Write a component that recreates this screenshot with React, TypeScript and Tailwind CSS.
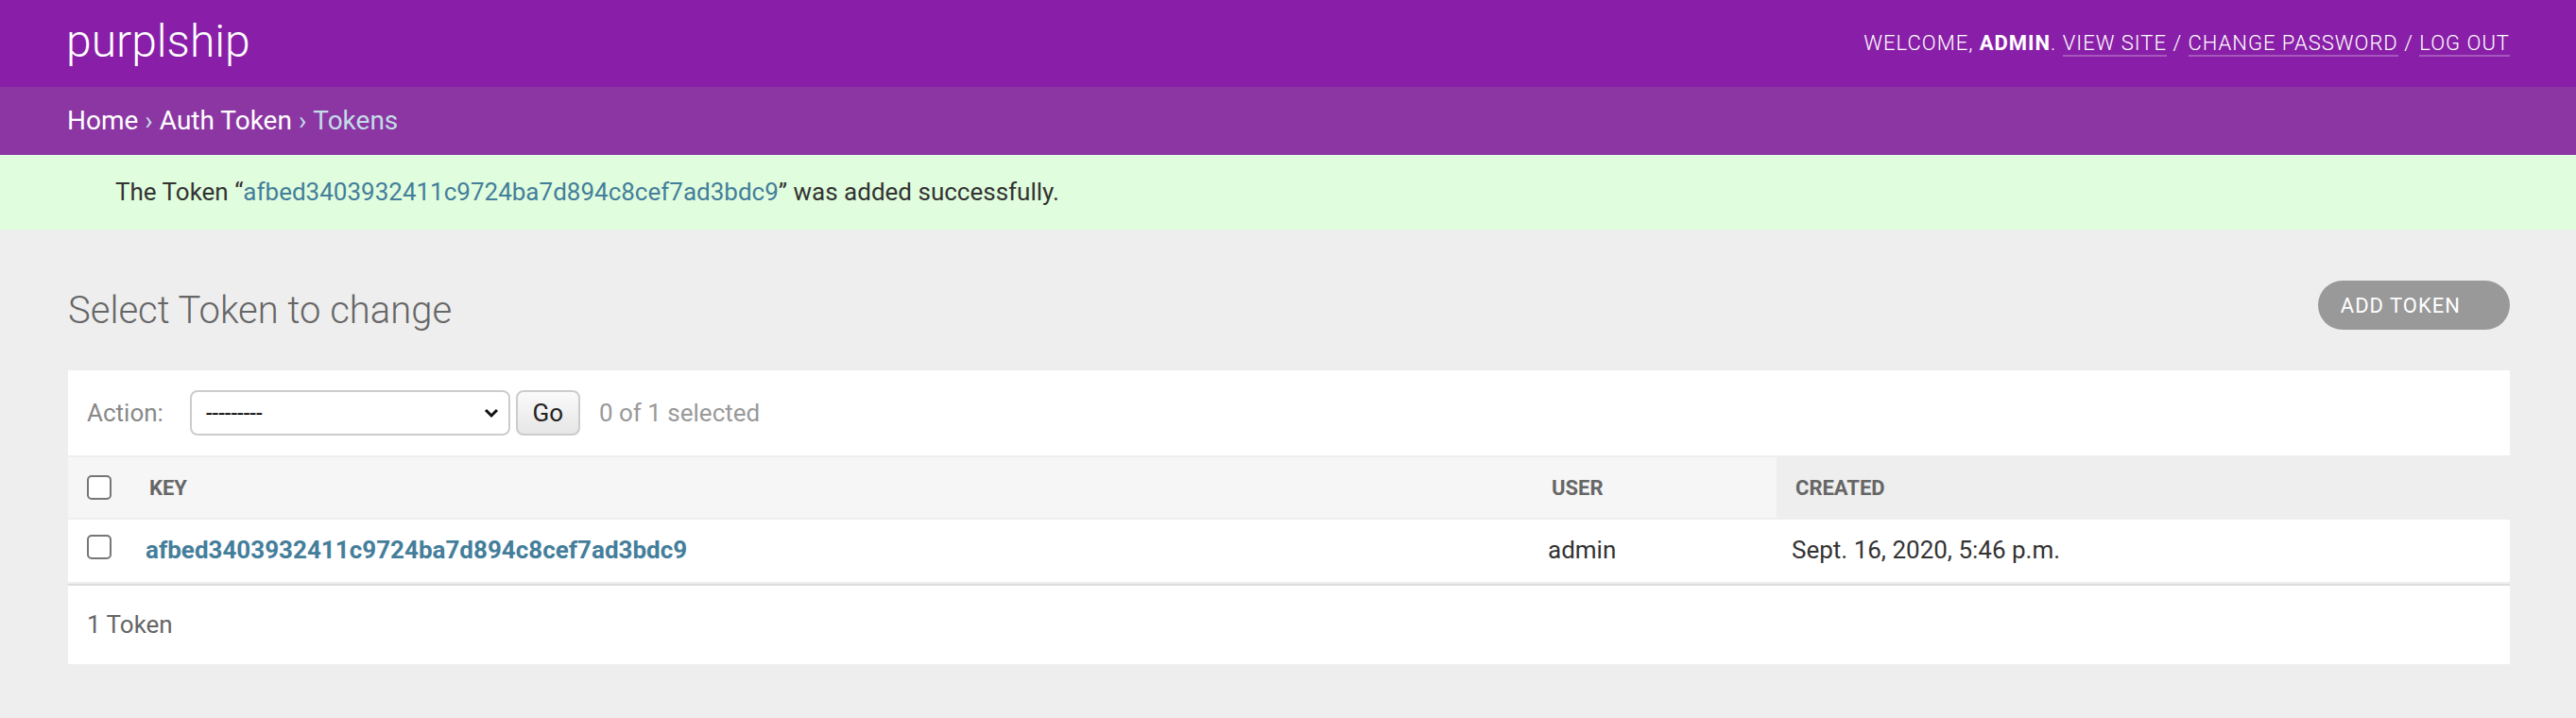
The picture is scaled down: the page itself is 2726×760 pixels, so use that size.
import React from "react";

const font = { fontFamily: "Roboto, 'Liberation Sans', sans-serif" };

function Checkbox() {
  return (
    <div className="h-[26px] w-[26px] rounded-[5px] border-2 border-[#767676] bg-white" />
  );
}

function Header() {
  return (
    <div className="flex h-[92px] items-center justify-between bg-[#891fa8] pl-[70px] pr-[70px] text-white">
      <div className="pb-[4px] text-[48px] font-light leading-none">purplship</div>
      <div className="pb-[2px] text-[22px] font-light uppercase tracking-[1px]">
        Welcome, <strong className="font-bold">admin</strong>.{" "}
        <a className="border-b-2 border-white/25">View site</a> /{" "}
        <a className="border-b-2 border-white/25">Change password</a> /{" "}
        <a className="border-b-2 border-white/25">Log out</a>
      </div>
    </div>
  );
}

function Breadcrumbs() {
  return (
    <div className="flex h-[72px] items-center bg-[#8b36a2] pl-[71px] text-[28px] text-[#c4dce8]">
      <a className="text-white">Home</a>
      <span className="px-[7px]">›</span>
      <a className="text-white">Auth Token</a>
      <span className="px-[7px]">›</span>
      <span>Tokens</span>
    </div>
  );
}

function Message() {
  return (
    <div className="mb-[20px] flex h-[79px] items-center bg-[#e0fddd] pl-[122px] text-[26px] text-[#333]">
      The Token “<a className="text-[#447e9b]">afbed3403932411c9724ba7d894c8cef7ad3bdc9</a>” was
      added successfully.
    </div>
  );
}

function Actions() {
  return (
    <div className="flex h-[90px] items-center bg-white pl-[20px] text-[26px] text-[#999]">
      <span className="text-[#888]">Action:</span>
      <div className="ml-[28px] flex h-[48px] w-[339px] items-center justify-between rounded-[8px] border-2 border-[#ccc] bg-white pl-[15px] pr-[10px] text-[24px] text-black">
        <span>---------</span>
        <svg width="16" height="12" viewBox="0 0 16 12">
          <path d="M2 3 L8 9 L14 3" fill="none" stroke="#111" strokeWidth="3" />
        </svg>
      </div>
      <div className="ml-[6px] flex h-[48px] w-[68px] items-center justify-center rounded-[8px] border-2 border-[#ccc] bg-[linear-gradient(#fafafa,#e6e6e6)] text-[26px] text-[#222]">
        Go
      </div>
      <span className="ml-[20px]">0 of 1 selected</span>
    </div>
  );
}

function Table() {
  return (
    <div className="bg-white">
      <div className="flex h-[68px] border-y-2 border-[#eee] bg-[#f6f6f6] text-[22px] font-bold uppercase text-[#666]">
        <div className="flex w-[66px] items-center justify-center">
          <Checkbox />
        </div>
        <div className="flex w-[1484px] items-center pl-[20px]">Key</div>
        <div className="flex w-[258px] items-center pl-[20px]">User</div>
        <div className="flex flex-1 items-center bg-[#eee] pl-[20px]">Created</div>
      </div>
      <div className="flex h-[68px] border-b-2 border-[#eee] text-[26px] text-[#333]">
        <div className="flex w-[66px] justify-center pt-[16px]">
          <Checkbox />
        </div>
        <div className="w-[1484px] pl-[16px] pt-[16px] leading-[32px]">
          <a className="font-bold text-[#447e9b]">afbed3403932411c9724ba7d894c8cef7ad3bdc9</a>
        </div>
        <div className="w-[258px] pl-[16px] pt-[16px] leading-[32px]">admin</div>
        <div className="flex-1 pl-[16px] pt-[16px] leading-[32px]">Sept. 16, 2020, 5:46 p.m.</div>
      </div>
      <div className="flex h-[85px] items-center border-t-2 border-[#ddd] pl-[20px] text-[26px] text-[#666]">
        1 Token
      </div>
    </div>
  );
}

export default function App() {
  return (
    <div className="min-h-[760px] bg-[#eee]" style={font}>
      <Header />
      <Breadcrumbs />
      <Message />
      <div className="pl-[72px] pr-[70px] pt-[42px]">
        <div className="mb-[40px] flex items-start justify-between">
          <h1 className="text-[40px] font-light leading-[47px] text-[#666]">Select Token to change</h1>
          <a className="-mt-[8px] flex h-[52px] items-center rounded-full bg-[#999] pl-[24px] pr-[52px] text-[22px] uppercase tracking-[1px] text-white">
            Add token
          </a>
        </div>
        <Actions />
        <Table />
      </div>
    </div>
  );
}
